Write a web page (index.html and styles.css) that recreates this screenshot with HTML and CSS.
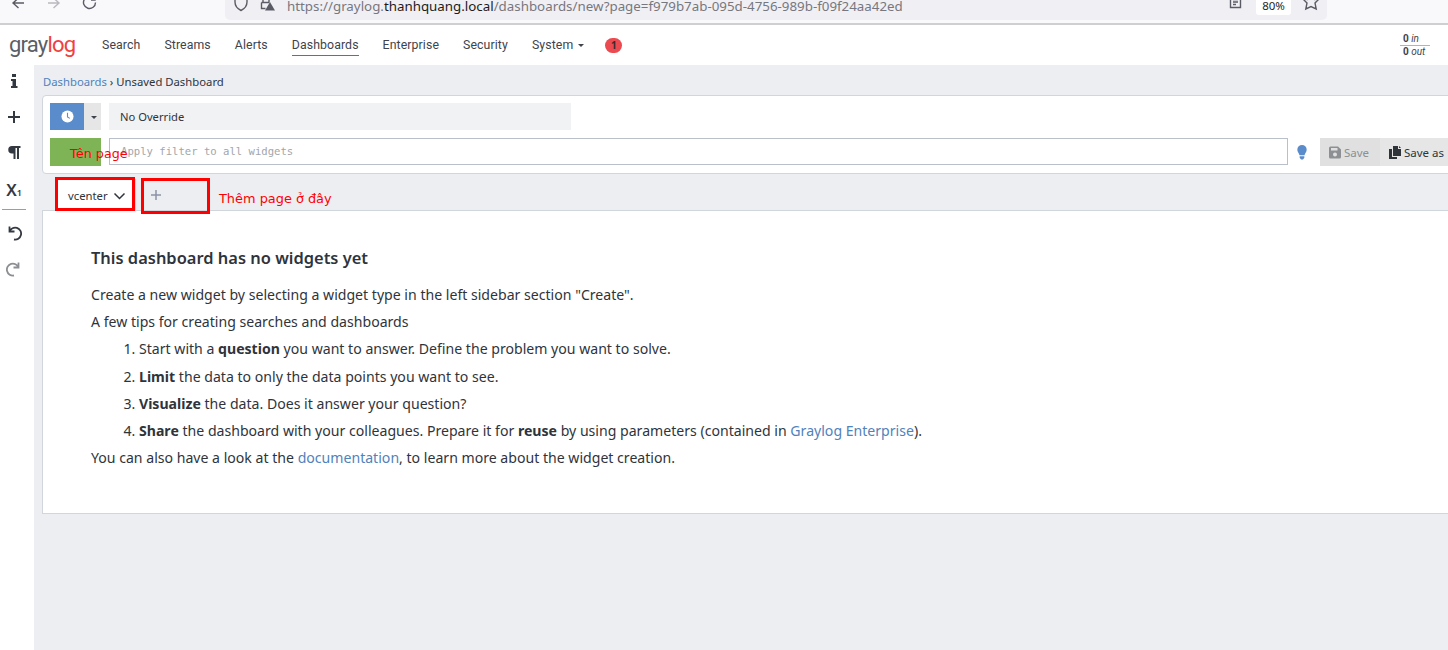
FILE: index.html
```html
<!DOCTYPE html>
<html lang="en">
<head>
    <meta charset="UTF-8">
    <meta name="viewport" content="width=device-width, initial-scale=1.0">
    <title>Unsaved Dashboard - Graylog</title>
    <link rel="stylesheet" href="styles.css">
</head>
<body>

    <!-- browser chrome, top is cut off in the screenshot -->
    <div class="browser-bar">
        <div class="browser-btns">
            <svg class="browser-icon" viewBox="0 0 16 16"><path d="M14 7H4M8.500 2L3 7l5.500 5"/></svg>
            <svg class="browser-icon faded" viewBox="0 0 16 16"><path d="M2 7h10M7.500 2L13 7l-5.500 5"/></svg>
            <svg class="browser-icon" viewBox="0 0 16 16"><path d="M13.500 6.500a6 6 0 1 1-1.500-4M13 0v4H9"/></svg>
        </div>
        <div class="url-bar">
            <svg class="browser-icon shield" viewBox="0 0 16 16"><path d="M2 0v5c0 4 3 7 6 8.500 3-1.500 6-4.500 6-8.500V0"/></svg>
            <svg class="browser-icon lock" viewBox="0 0 16 16"><path d="M4 5V1.500M10 5V1.500M2.500 5.500h8M2.500 5.500v6h4"/><path class="warn" d="M11 5l5 8.500H6z"/></svg>
            <span class="url">https://graylog.<b>thanhquang.local</b>/dashboards/new?page=f979b7ab-095d-4756-989b-f09f24aa42ed</span>
            <svg class="browser-icon reader" viewBox="0 0 16 16"><path d="M2.500 0v11.500h10V0M5 3.500h5M5 6h5M5 8.500h3"/></svg>
            <span class="zoom-level">80%</span>
            <svg class="browser-icon star" viewBox="0 0 18 16"><path d="M5 0L7 .5M13 0l-2 .5M1 3l5 .5M17 3l-5 .5M1 3l4 4-1.200 6L9 10.500l5.200 2.500L13 7l4-4"/></svg>
        </div>
    </div>

    <nav class="topnav">
        <div class="logo">gray<span class="logo-red">log</span></div>
        <ul class="nav-links">
            <li>Search</li>
            <li>Streams</li>
            <li>Alerts</li>
            <li class="active">Dashboards</li>
            <li>Enterprise</li>
            <li>Security</li>
            <li>System <span class="caret"></span></li>
        </ul>
        <span class="notif-badge">1</span>
        <div class="throughput">
            <div class="tp-in"><b>0</b> <i>in</i></div>
            <div class="tp-out"><b>0</b> <i>out</i></div>
        </div>
    </nav>

    <div class="main">
        <aside class="sidebar">
            <svg class="side-icon" viewBox="0 0 16 16"><path class="solid" d="M6 1h4v3H6zM5 6h5v7h1.500v2h-6.500v-2H6.500V8H5z"/></svg>
            <svg class="side-icon" viewBox="0 0 16 16"><path class="line" d="M8 2v12M2 8h12"/></svg>
            <svg class="side-icon" viewBox="0 0 16 16"><path class="solid" d="M6 1h8.500v2H13v11h-2V3H9.500v11h-2V8.500H6a3.700 3.700 0 0 1 0-7.500z"/></svg>
            <div class="side-sub">X<sub>1</sub></div>
            <div class="side-divider"></div>
            <svg class="side-icon undo" viewBox="0 0 16 16"><path class="line thin" d="M3.500 1.500v5h5M3.500 6.500A6 6 0 1 1 8 14.500"/></svg>
            <svg class="side-icon redo" viewBox="0 0 16 16"><path class="line thin" d="M12.500 1.500v5h-5M12.500 6.500A6 6 0 1 0 8 14.500"/></svg>
        </aside>

        <div class="content">
            <div class="breadcrumb"><a>Dashboards</a> <span class="sep">›</span> Unsaved Dashboard</div>

            <section class="query-bar">
                <div class="query-row">
                    <div class="time-group">
                        <button class="time-btn">
                            <svg viewBox="0 0 14 14" class="clock"><circle cx="7" cy="7" r="6.500"/><path d="M7 3v4.500l2.500 1.500"/></svg>
                        </button>
                        <button class="time-caret"><span class="caret"></span></button>
                    </div>
                    <div class="override">No Override</div>
                </div>
                <div class="query-row">
                    <button class="search-btn"></button>
                    <div class="filter-input">Apply filter to all widgets</div>
                    <svg class="bulb" viewBox="0 0 12 16"><path d="M6 0a5 5 0 0 1 5 5c0 2.500-1.800 3.500-2.300 6H3.300C2.800 8.500 1 7.500 1 5a5 5 0 0 1 5-5zM3.500 12h5v1.500L7 15.500H5l-1.500-2z"/></svg>
                    <div class="save-group">
                        <button class="save-btn disabled">
                            <svg viewBox="0 0 12 12"><path d="M0 1.500A1.500 1.500 0 0 1 1.500 0H9l3 3v7.500a1.500 1.500 0 0 1-1.500 1.500h-9A1.500 1.500 0 0 1 0 10.500zM2 1.500V4h6.500V1.500zM6 6a2 2 0 1 0 0 4 2 2 0 0 0 0-4z" fill-rule="evenodd"/></svg>
                            Save
                        </button>
                        <button class="save-btn">
                            <svg viewBox="0 0 12 13"><path d="M4 0h5v3h3v7H4zM10 0l2 2h-2zM0 3h3v8h5v2H0z"/></svg>
                            Save as
                        </button>
                    </div>
                </div>
            </section>

            <div class="tabs">
                <div class="tab tab-active">vcenter
                    <svg class="chevron" viewBox="0 0 12 8"><path d="M1 1.500l5 5 5-5"/></svg>
                </div>
                <div class="tab tab-add">
                    <svg class="plus" viewBox="0 0 12 12"><path d="M6 1v10M1 6h10"/></svg>
                </div>
            </div>

            <section class="panel">
                <h2>This dashboard has no widgets yet</h2>
                <p>Create a new widget by selecting a widget type in the left sidebar section "Create".</p>
                <p>A few tips for creating searches and dashboards</p>
                <ol>
                    <li>Start with a <strong>question</strong> you want to answer. Define the problem you want to solve.</li>
                    <li><strong>Limit</strong> the data to only the data points you want to see.</li>
                    <li><strong>Visualize</strong> the data. Does it answer your question?</li>
                    <li><strong>Share</strong> the dashboard with your colleagues. Prepare it for <strong>reuse</strong> by using parameters (contained in <a>Graylog Enterprise</a>).</li>
                </ol>
                <p>You can also have a look at the <a>documentation</a>, to learn more about the widget creation.</p>
            </section>
        </div>
    </div>

    <!-- red annotations drawn on top of the screenshot -->
    <div class="note note-name">Tên page</div>
    <div class="note-box box-tab"></div>
    <div class="note-box box-add"></div>
    <div class="note note-add">Thêm page ở đây</div>

</body>
</html>
```

FILE: styles.css
```css
* {
    box-sizing: border-box;
}
html, body {
    margin: 0;
    height: 650px;
    overflow: hidden;
}
body {
    position: relative;
    width: 1448px;
    font-family: "Noto Sans", Arial, sans-serif;
    color: #1f1f1f;
    background-color: #eceef2;
}
button {
    border: 0;
    padding: 0;
    font-family: inherit;
}

/* browser chrome */
.browser-bar {
    display: flex;
    height: 25px;
    background-color: #f9f9fb;
    border-bottom: 2px solid #cfcfd2;
    overflow: hidden;
}
.browser-btns {
    display: flex;
    align-items: flex-end;
    gap: 20px;
    width: 225px;
    padding: 0 0 11px 10px;
}
.browser-icon {
    width: 16px;
    height: 16px;
    fill: none;
    stroke: #5b5b66;
    stroke-width: 1.400;
    flex: none;
}
.browser-icon.faded {
    stroke: #b9b9bf;
}
.url-bar {
    display: flex;
    align-items: center;
    width: 1102px;
    height: 20px;
    padding: 0 7px 8px 8px;
    background-color: #f0f0f4;
    border-radius: 0 0 5px 5px;
}
.shield {
    margin-right: 10px;
    margin-top: -2px;
}
.lock {
    margin-right: 12px;
    margin-top: -2px;
}
.lock .warn {
    fill: #5b5b66;
    stroke: none;
}
.url {
    font: 13.330px/12px "Noto Sans", Arial, sans-serif;
    color: #77777f;
    white-space: nowrap;
}
.url b {
    font-weight: 400;
    color: #1c1b22;
}
.reader {
    margin-left: auto;
    margin-top: -4px;
}
.zoom-level {
    width: 35px;
    height: 15px;
    margin: 3px 11px 0 12px;
    background-color: #fff;
    border-radius: 0 0 3px 3px;
    font-size: 11.500px;
    line-height: 11px;
    text-align: center;
}
.star {
    width: 18px;
    margin-top: -4px;
}

/* graylog navigation */
.topnav {
    display: flex;
    align-items: center;
    height: 40px;
    background-color: #fff;
    position: relative;
}
.logo {
    width: 102px;
    padding-left: 9px;
    font-family: Roboto, Arial, sans-serif;
    font-size: 22px;
    letter-spacing: -0.8px;
    color: #5a5f66;
    line-height: 1;
    margin-top: -1px;
}
.logo-red {
    color: #f04040;
}
.nav-links {
    display: flex;
    gap: 24px;
    margin: 0;
    padding: 0;
    list-style: none;
    font-family: Roboto, Arial, sans-serif;
    font-size: 12.300px;
    color: #3e434c;
    letter-spacing: .1px;
}
.nav-links li {
    padding: 2px 0 3px;
    border-bottom: 1px solid transparent;
    margin-top: 1px;
}
.nav-links li.active {
    border-bottom-color: #6c6f75;
}
.caret {
    display: inline-block;
    width: 0;
    height: 0;
    margin-left: 2px;
    vertical-align: middle;
    border-top: 3px solid #3e434c;
    border-left: 3px solid transparent;
    border-right: 3px solid transparent;
}
.notif-badge {
    width: 17px;
    height: 15px;
    margin-left: 21px;
    margin-top: 1px;
    border-radius: 8px;
    background-color: #ea4a50;
    color: #3a2a2e;
    font-size: 10px;
    font-weight: 700;
    line-height: 15px;
    text-align: center;
}
.throughput {
    margin-left: auto;
    width: 30px;
    margin-right: 18px;
    font-family: Roboto, Arial, sans-serif;
    font-size: 10px;
    line-height: 11.500px;
    color: #3e434c;
}
.tp-in {
    border-bottom: 1px solid #a9b3c9;
    padding-left: 3px;
}
.tp-out {
    padding-left: 3px;
}

/* left sidebar */
.main {
    display: flex;
    height: 585px;
}
.sidebar {
    display: flex;
    flex-direction: column;
    align-items: center;
    flex: none;
    width: 34px;
    padding: 8px 6px 0 0;
    background-color: #fff;
}
.side-icon {
    width: 16px;
    height: 16px;
    margin-bottom: 20px;
    flex: none;
}
.side-icon .solid {
    fill: #333940;
}
.side-icon .line {
    fill: none;
    stroke: #333940;
    stroke-width: 2;
}
.side-icon .thin {
    stroke-width: 1.800;
}
.side-icon.redo .line {
    stroke: #8b8e92;
}
.side-sub {
    height: 22px;
    margin-top: -2px;
    font-size: 16.500px;
    line-height: 22px;
    color: #333940;
    font-weight: 600;
}
.side-sub sub {
    font-size: 9px;
    line-height: 0;
    vertical-align: baseline;
}
.side-divider {
    flex: none;
    width: 24px;
    border-top: 1px solid #9a9da2;
    margin: 8px 0 15px;
}

/* dashboard area */
.content {
    flex: none;
    width: 1414px;
    padding-left: 8px;
    overflow: hidden;
}
.breadcrumb {
    height: 30px;
    padding: 9px 0 0 1px;
    font-size: 11.300px;
    line-height: 16px;
    color: #2f343b;
}
.breadcrumb a, .panel a {
    color: #5082bc;
}
.query-bar {
    width: 1420px;
    height: 79px;
    padding: 7px 7px 0;
    background-color: #fff;
    border: 1px solid #d1d5dc;
    border-radius: 4px 0 0 4px;
}
.query-row {
    display: flex;
    align-items: flex-start;
    margin-bottom: 8px;
}
.time-group {
    display: flex;
    width: 51px;
    height: 27px;
}
.time-btn {
    width: 34px;
    background-color: #5a8ccc;
}
.clock {
    width: 13px;
    height: 13px;
    display: block;
    margin: 0 auto;
    fill: #fff;
}
.clock path {
    fill: none;
    stroke: #5a8ccc;
    stroke-width: 1.200;
}
.time-caret {
    width: 17px;
    background-color: #e6e6e6;
}
.override {
    width: 462px;
    height: 27px;
    margin-left: 8px;
    padding-left: 11px;
    background-color: #f1f2f4;
    font-size: 11.200px;
    line-height: 28px;
    color: #2f343b;
}
.search-btn {
    width: 51px;
    height: 28px;
    background-color: #7eb356;
}
.filter-input {
    width: 1179px;
    height: 27px;
    margin-left: 8px;
    padding-left: 11px;
    background-color: #fff;
    border: 1px solid #b9c0ca;
    font-family: "DejaVu Sans Mono", "Liberation Mono", monospace;
    font-size: 10.600px;
    line-height: 24px;
    color: #a2a6ab;
}
.bulb {
    align-self: center;
    width: 12px;
    height: 15px;
    margin-left: 8px;
    fill: #5a8ccc;
}
.save-group {
    display: flex;
    margin-left: 12px;
}
.save-btn {
    display: flex;
    align-items: center;
    gap: 3px;
    height: 28px;
    padding: 0 9px;
    background-color: #e6e6e6;
    font-size: 11.500px;
    color: #2f343b;
    white-space: nowrap;
}
.save-btn svg {
    width: 12px;
    height: 13px;
    fill: #2f343b;
}
.save-btn.disabled {
    width: 60px;
    color: #8c8f93;
    background-color: #e0e0e0;
}
.save-btn.disabled svg {
    fill: #8c8f93;
}
.tabs {
    display: flex;
    gap: 7px;
    height: 36px;
    padding: 5px 0 0 14px;
}
.tab {
    display: flex;
    align-items: center;
}
.tab-active {
    gap: 5px;
    width: 80px;
    height: 31px;
    padding-left: 11px;
    padding-top: 1px;
    background-color: #fff;
    border: 1px solid #d1d5dc;
    border-bottom: 0;
    font-size: 11.300px;
    color: #2f343b;
}
.chevron {
    width: 13px;
    height: 8px;
    fill: none;
    stroke: #2f343b;
    stroke-width: 1.500;
}
.tab-add {
    width: 68px;
    padding-left: 7px;
}
.plus {
    width: 12px;
    height: 12px;
    stroke: #8b95a5;
    stroke-width: 1.500;
}
.panel {
    width: 1420px;
    height: 304px;
    padding: 32px 48px 0;
    background-color: #fff;
    border: 1px solid #d1d5dc;
    font-size: 14.100px;
    color: #2f343b;
}
.panel h2 {
    margin: 0 0 8px;
    font-size: 16.450px;
    line-height: 30px;
    font-weight: 600;
}
.panel p {
    margin: 0;
    line-height: 27.200px;
}
.panel ol {
    margin: 0;
    padding-left: 48px;
}
.panel li {
    line-height: 27.200px;
}
.panel strong {
    font-weight: 700;
}

/* annotations */
.note {
    position: absolute;
    font-family: "DejaVu Sans", Arial, sans-serif;
    font-size: 12.700px;
    color: #ff0000;
    line-height: 16px;
    white-space: nowrap;
}
.note-name {
    left: 70px;
    top: 146px;
}
.note-add {
    left: 219px;
    top: 191px;
    font-size: 12.900px;
}
.note-box {
    position: absolute;
    border: 3px solid #ff0000;
}
.box-tab {
    left: 55px;
    top: 177px;
    width: 80px;
    height: 34px;
}
.box-add {
    left: 141px;
    top: 178px;
    width: 69px;
    height: 36px;
}
```
